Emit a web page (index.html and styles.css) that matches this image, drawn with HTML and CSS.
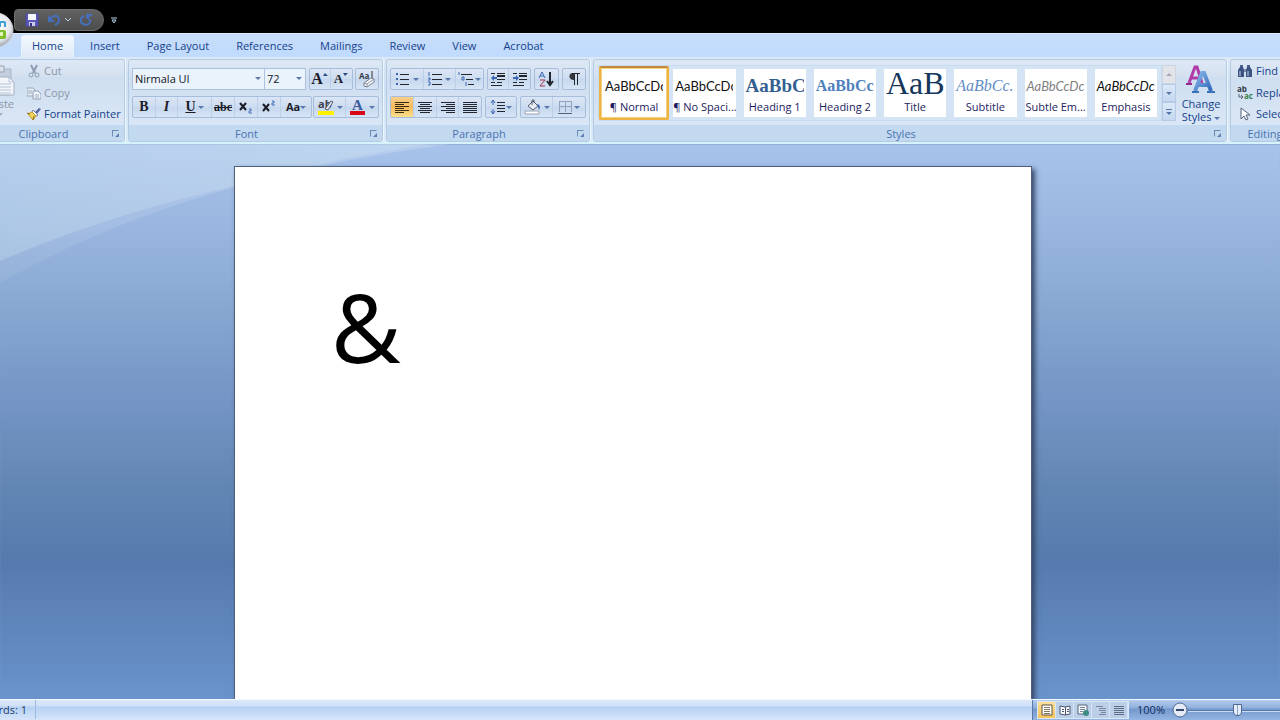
FILE: index.html
```html
<!DOCTYPE html>
<html lang="en">
<head>
<meta charset="utf-8">
<title>Document - Word</title>
<link rel="stylesheet" href="styles.css">
</head>
<body>
<div class="app">
  <header class="titlebar">
    <button class="office" aria-label="Office Button">
      <svg width="36" height="36" viewBox="0 0 36 36">
        <defs><radialGradient id="orb" cx=".5" cy=".4" r=".6"><stop offset="0" stop-color="#fff"/><stop offset=".7" stop-color="#e6e8ec"/><stop offset="1" stop-color="#9aa0aa"/></radialGradient></defs>
        <circle cx="18" cy="18" r="17" fill="url(#orb)" stroke="#c8ccd2"/>
        <path d="M22 15v-4q0-1 1-1h3q1 0 1 1v4" fill="none" stroke="#3b9fd8" stroke-width="2"/>
        <rect x="20" y="18" width="8" height="9" rx="2" fill="#7fbf2c"/><rect x="22" y="20" width="3" height="4" rx="1" fill="#e8f6c0"/>
        <path d="M10 20h6v6h-6z" fill="none" stroke="#e0652a" stroke-width="2"/>
      </svg>
    </button>
    <div class="quick">
      <button class="plain" aria-label="Save"><svg width="14" height="14" viewBox="0 0 14 14"><path d="M1 1h12v12H1z" fill="#5a58b8" stroke="#4a4aa4"/><path d="M3 1h8v6H3z" fill="#f4f6ff"/><path d="M4 9h6v4H4z" fill="#c9cdea"/><path d="M5 10h2v3H5z" fill="#30307c"/></svg></button>
      <button class="plain undo" aria-label="Undo"><svg width="14" height="14" viewBox="0 0 14 14"><path d="M4 5C8 1 12 3 12 7c0 3-2 4-4 5" fill="none" stroke="#456fba" stroke-width="2"/><path d="M1 2v7h7z" fill="#456fba"/></svg><svg width="6" height="4" viewBox="0 0 6 4"><path d="M0 0l3 3 3-3" fill="none" stroke="#b8d4ee"/></svg></button>
      <button class="plain" aria-label="Repeat"><svg width="14" height="14" viewBox="0 0 14 14"><path d="M5 3C1 4 1 10 4 11c4 2 8 0 7-5" fill="none" stroke="#456fba" stroke-width="2"/><path d="M7 1h6v2l-3 1v3L7 5z" fill="#456fba"/></svg></button>
    </div>
    <button class="plain more" aria-label="Customize Quick Access Toolbar"><svg width="6" height="7" viewBox="0 0 6 7"><path d="M0 1h6" stroke="#b8d4ee"/><path d="M1 3h4L3 6z" fill="none" stroke="#b8d4ee"/></svg></button>
  </header>

  <nav class="tabs">
    <button class="tab active">Home</button>
    <button class="tab">Insert</button>
    <button class="tab">Page Layout</button>
    <button class="tab">References</button>
    <button class="tab">Mailings</button>
    <button class="tab">Review</button>
    <button class="tab">View</button>
    <button class="tab">Acrobat</button>
  </nav>

  <main class="ribbon">
    <section class="group clipboard">
      <div class="body">
        <button class="paste" disabled>
          <svg width="32" height="32" viewBox="0 0 32 32"><path d="M3 4h24v26H3z" fill="#c3cfde" stroke="#a9b7c8"/><path d="M10 1h10v6H10z" fill="#dbe2ec" stroke="#97a5b8"/><path d="M11 12h14l5 5v13H11z" fill="#f2f6fb" stroke="#a4b1c2"/><path d="M25 12v5h5M13 19h14M13 22h14M13 25h14M13 28h14" fill="none" stroke="#b7c3d3"/></svg>
          <span>Paste</span><i class="caret pale"></i>
        </button>
        <div class="stack">
          <button class="cmd" disabled><svg width="14" height="14" viewBox="0 0 14 14"><path d="M4 1l4 8M10 1L6 9" stroke="#8c9bb2" stroke-width="2"/><circle cx="4" cy="11" r="2" fill="none" stroke="#8c9bb2"/><circle cx="10" cy="11" r="2" fill="none" stroke="#8c9bb2"/></svg>Cut</button>
          <button class="cmd" disabled><svg width="14" height="14" viewBox="0 0 14 14"><path d="M0 2h6l2 2v6H0z" fill="#e6edf6" stroke="#98a7bc"/><path d="M6 5h5l3 3v5H6z" fill="#eef3f9" stroke="#8f9fb5"/><path d="M1 5h4M1 7h4M8 9h4M8 11h4" stroke="#9eacbf"/></svg>Copy</button>
          <button class="cmd"><svg width="14" height="14" viewBox="0 0 14 14"><path d="M8 5l4-4 2 1-4 5z" fill="#5b66a8"/><path d="M6 3l5 5-2 1-4-4z" fill="#fff" stroke="#707a90"/><path d="M5 5l4 4-3 4-5-6z" fill="#f2d35c" stroke="#c29a2c"/><path d="M0 6l3 1M6 13l1-4" stroke="#8a6a1c"/></svg>Format Painter</button>
        </div>
      </div>
      <footer class="caption"><span>Clipboard</span><button class="launch" aria-label="Clipboard options"></button></footer>
    </section>

    <section class="group font">
      <div class="body rows">
        <div class="row">
          <div class="combos">
            <label class="combo name"><select aria-label="Font"><option>Nirmala UI</option></select><i class="caret"></i></label>
            <label class="combo size"><select aria-label="Font size"><option>72</option></select><i class="caret"></i></label>
          </div>
          <div class="set">
            <button aria-label="Grow Font"><span class="serif big">A</span><svg class="sup" width="5" height="4" viewBox="0 0 5 4"><path d="M0 3l2-3 3 3z" fill="#2d4c86"/></svg></button>
            <button aria-label="Shrink Font"><span class="serif mid">A</span><svg class="sup" width="5" height="4" viewBox="0 0 5 4"><path d="M0 0h5L2 3z" fill="#2d4c86"/></svg></button>
          </div>
          <div class="set"><button class="w22" aria-label="Clear Formatting"><svg width="18" height="18" viewBox="0 0 18 18"><text x="1" y="9" class="tiny">Aa</text><path d="M14 1v7" stroke="#333"/><path d="M6 13l7-5 3 1v3l-7 5-3-1z" fill="#f4f6fa" stroke="#777f90"/><path d="M6 13l3 1 7-5M9 14v3" fill="none" stroke="#8d95a6"/></svg></button></div>
        </div>
        <div class="row">
          <div class="set">
            <button class="w23 serif bold">B</button>
            <button class="w22 serif ital">I</button>
            <button class="w34"><span class="serif under">U</span><i class="caret"></i></button>
            <button class="w23"><span class="strike">abc</span></button>
            <button class="w23" aria-label="Subscript"><svg width="16" height="14" viewBox="0 0 16 14"><path d="M2 3l6 7M8 3l-6 7" stroke="#1c1c28" stroke-width="2"/><path d="M11 9h2v2h-2v2h3" fill="none" stroke="#456fba"/></svg></button>
            <button class="w23" aria-label="Superscript"><svg width="16" height="14" viewBox="0 0 16 14"><path d="M2 4l6 7M8 4l-6 7" stroke="#1c1c28" stroke-width="2"/><path d="M11 1h2v2h-2v2h3" fill="none" stroke="#456fba"/></svg></button>
            <button class="w30"><span class="case">Aa</span><i class="caret"></i></button>
          </div>
          <div class="set">
            <button class="w32" aria-label="Text Highlight Color"><svg width="18" height="18" viewBox="0 0 18 18"><path d="M1 13h16v4H1z" fill="#fff000"/><text x="1" y="10" class="mark">ab</text><path d="M8 11l6-8 2 1-5 8z" fill="#e4e6ee" stroke="#555d70"/></svg><i class="caret"></i></button>
            <button class="w32" aria-label="Font Color"><svg width="18" height="18" viewBox="0 0 18 18"><path d="M1 13h15v4H1z" fill="#d80818"/><text x="3" y="12" class="letter">A</text></svg><i class="caret"></i></button>
          </div>
        </div>
      </div>
      <footer class="caption"><span>Font</span><button class="launch" aria-label="Font options"></button></footer>
    </section>

    <section class="group para">
      <div class="body rows">
        <div class="row">
          <div class="set">
            <button class="w34" aria-label="Bullets"><svg width="16" height="14" viewBox="0 0 16 14"><path d="M1 2h2M1 7h2M1 12h2" stroke="#3c66b4" stroke-width="2"/><path d="M5 2h9M5 7h9M5 12h9" stroke="#22262e"/></svg><i class="caret"></i></button>
            <button class="w32" aria-label="Numbering"><svg width="16" height="14" viewBox="0 0 16 14"><path d="M2 0v4M1 6h2v2H1M1 10h2v3H1" fill="none" stroke="#3c66b4"/><path d="M5 2h10M5 7h10M5 12h10" stroke="#22262e"/></svg><i class="caret"></i></button>
            <button class="w28" aria-label="Multilevel List"><svg width="17" height="14" viewBox="0 0 17 14"><path d="M1 0v3M4 5h2v3H4zM8 10v4" fill="none" stroke="#3c66b4"/><path d="M3 2h11M8 7h7M10 12h6" stroke="#22262e"/></svg><i class="caret"></i></button>
          </div>
          <div class="set">
            <button class="w22" aria-label="Decrease Indent"><svg width="16" height="14" viewBox="0 0 16 14"><path d="M1 1h4M7 1h8M7 7h8M7 10h5M1 10h4M1 13h11" stroke="#22262e"/><path d="M7 4h8" stroke="#22262e" stroke-width="2"/><path d="M1 6l3-3v2h3v2H4v2z" fill="#3c66b4"/></svg></button>
            <button aria-label="Increase Indent"><svg width="16" height="14" viewBox="0 0 16 14"><path d="M1 1h4M7 1h8M7 7h8M7 10h5M1 10h4M1 13h11" stroke="#22262e"/><path d="M7 4h8" stroke="#22262e" stroke-width="2"/><path d="M7 6L4 3v2H1v2h3v2z" fill="#3c66b4"/></svg></button>
          </div>
          <div class="set"><button class="w23" aria-label="Sort"><svg width="16" height="16" viewBox="0 0 16 16"><path d="M1 7l3-6 3 6M2 5h4" fill="none" stroke="#3c66b4"/><path d="M2 9h5l-5 6h5" fill="none" stroke="#a3344a"/><path d="M12 1v12M9 10l3 4 3-4" fill="none" stroke="#22262e" stroke-width="2"/></svg></button></div>
          <div class="set"><button class="w23" aria-label="Show paragraph marks"><svg width="14" height="14" viewBox="0 0 14 14"><path d="M7 8C1 8 1 1 6 1h1z" fill="#33373f"/><path d="M5 1h8M7 1v12M10 1v12" stroke="#22262e"/></svg></button></div>
        </div>
        <div class="row">
          <div class="set">
            <button class="w23 on" aria-label="Align Left"><svg width="16" height="14" viewBox="0 0 16 14"><path d="M1 2h14M1 4h9M1 6h14M1 8h9M1 10h14M1 12h9" stroke="#3a2c14"/></svg></button>
            <button class="w23" aria-label="Center"><svg width="16" height="14" viewBox="0 0 16 14"><path d="M1 2h14M3 4h10M1 6h14M3 8h10M1 10h14M3 12h10" stroke="#22262e"/></svg></button>
            <button class="w22" aria-label="Align Right"><svg width="16" height="14" viewBox="0 0 16 14"><path d="M1 2h14M6 4h9M1 6h14M6 8h9M1 10h14M6 12h9" stroke="#22262e"/></svg></button>
            <button class="w22" aria-label="Justify"><svg width="16" height="14" viewBox="0 0 16 14"><path d="M1 2h14M1 4h14M1 6h14M1 8h14M1 10h14M1 12h14" stroke="#22262e"/></svg></button>
          </div>
          <div class="set"><button class="w30" aria-label="Line Spacing"><svg width="16" height="16" viewBox="0 0 16 16"><path d="M3 1v5M3 10v5M1 4l2-3 2 3M1 12l2 3 2-3" fill="none" stroke="#3c66b4"/><path d="M7 3h8M7 6h8M7 9h8M7 12h8" stroke="#22262e"/></svg><i class="caret"></i></button></div>
          <div class="set">
            <button class="w32" aria-label="Shading"><svg width="18" height="16" viewBox="0 0 18 16"><path d="M1 12h14v3H1z" fill="#fff" stroke="#9aa4b4"/><path d="M4 7l5-5 5 5-5 4z" fill="#e9eef6" stroke="#566070"/><path d="M8 6V1h2v3" fill="none" stroke="#566070"/><path d="M13 5c4 1 3 4 2 6z" fill="#3c66b4"/></svg><i class="caret"></i></button>
            <button class="w32" aria-label="Borders"><svg width="14" height="14" viewBox="0 0 14 14"><path d="M1 1h12M1 6h12M1 1v11M7 1v11M13 1v11" stroke="#93a3bc"/><path d="M0 13h14" stroke="#55617a"/></svg><i class="caret"></i></button>
          </div>
        </div>
      </div>
      <footer class="caption"><span>Paragraph</span><button class="launch" aria-label="Paragraph options"></button></footer>
    </section>

    <section class="group styles">
      <div class="body">
        <div class="gallery">
          <button class="style picked"><span class="sample">AaBbCcDc</span><span class="label">¶ Normal</span></button>
          <button class="style"><span class="sample">AaBbCcDc</span><span class="label">¶ No Spaci...</span></button>
          <button class="style"><span class="sample h1">AaBbCc</span><span class="label">Heading 1</span></button>
          <button class="style"><span class="sample h2">AaBbCc</span><span class="label">Heading 2</span></button>
          <button class="style"><span class="sample title">AaB</span><span class="label">Title</span></button>
          <button class="style"><span class="sample subtitle">AaBbCc.</span><span class="label">Subtitle</span></button>
          <button class="style"><span class="sample subtle">AaBbCcDc</span><span class="label">Subtle Em...</span></button>
          <button class="style"><span class="sample emph">AaBbCcDc</span><span class="label">Emphasis</span></button>
        </div>
        <div class="scroller">
          <button class="off" aria-label="Scroll up"><i class="caret up"></i></button>
          <button aria-label="Scroll down"><i class="caret"></i></button>
          <button aria-label="More styles"><i class="bar"></i><i class="caret"></i></button>
        </div>
        <button class="change">
          <svg width="32" height="32" viewBox="0 0 32 32"><defs><linearGradient id="blue" x2="1" y2="1"><stop offset="0" stop-color="#8ab8ea"/><stop offset="1" stop-color="#2f68b8"/></linearGradient></defs><path d="M4 18L10 2h2l5 16M6 13h9" fill="none" stroke="#b03aa8" stroke-width="3"/><path d="M1 19h6" stroke="#8c2c90" stroke-width="2"/><path d="M10 26l7-18h2l7 18M13 20h11" fill="none" stroke="url(#blue)" stroke-width="4"/><path d="M7 27h7M22 27h8" stroke="#3a70b8" stroke-width="2"/></svg>
          <span>Change</span><span>Styles <i class="caret"></i></span>
        </button>
      </div>
      <footer class="caption"><span>Styles</span><button class="launch" aria-label="Styles options"></button></footer>
    </section>

    <section class="group editing">
      <div class="body stack">
        <button class="cmd"><svg width="16" height="14" viewBox="0 0 16 14"><path d="M3 1h3v3H3zM10 1h3v3h-3z" fill="#4d628c"/><path d="M1 6l2-3h3l1 3v7H1zM15 6l-2-3h-3L9 6v7h6z" fill="#3c5280"/><path d="M7 5h2v3H7z" fill="#7b8db0"/><path d="M3 7v5M11 7v5" stroke="#c6d3ea"/></svg>Find</button>
        <button class="cmd"><svg width="16" height="14" viewBox="0 0 16 14"><text x="0" y="6" class="tiny">ab</text><text x="7" y="13" class="tiny green">ac</text><path d="M2 8v3h4M4 9l2 2-2 2" fill="none" stroke="#55617a"/></svg>Replace</button>
        <button class="cmd"><svg width="16" height="14" viewBox="0 0 16 14"><path d="M4 1v11l3-3 2 4 2-1-2-4h4z" fill="#fff" stroke="#55617a"/></svg>Select</button>
      </div>
      <footer class="caption"><span>Editing</span></footer>
    </section>
  </main>

  <div class="workspace">
    <svg class="swoosh" width="480" height="140" viewBox="0 0 480 140">
      <defs><linearGradient id="sheen" x2="1"><stop offset="0" stop-color="#fff" stop-opacity=".06"/><stop offset="1" stop-color="#fff" stop-opacity=".2"/></linearGradient></defs>
      <path d="M0 0H450Q340 14 235 43Q110 77 0 139z" fill="url(#sheen)"/>
      <path d="M0 0H430Q330 14 235 42Q110 70 0 117z" fill="#d6ecf4" fill-opacity=".26"/>
    </svg>
    <article class="page" contenteditable="true" spellcheck="false"><p>&amp;</p></article>
  </div>

  <footer class="status">
    <div class="info"><span class="words">Words: 1</span></div>
    <div class="view">
      <div class="modes">
        <button class="on" aria-label="Print Layout"><svg width="14" height="12" viewBox="0 0 14 12"><path d="M2 1h10v10H2z" fill="#fff" stroke="#5c5340"/><path d="M4 3h6M4 5h6M4 7h6M4 9h6" stroke="#857a60"/></svg></button>
        <button aria-label="Full Screen Reading"><svg width="14" height="12" viewBox="0 0 14 12"><path d="M2 2l5 1 5-1v8l-5 1-5-1z" fill="#f6f8fc" stroke="#4a556a"/><path d="M7 3v8M4 5h2M4 7h2M9 5h2M9 7h2" stroke="#4a556a"/></svg></button>
        <button aria-label="Web Layout"><svg width="14" height="12" viewBox="0 0 14 12"><path d="M2 1h9v9H2z" fill="#f4f7fb" stroke="#59647a"/><path d="M4 3h5M4 5h5M4 7h3" stroke="#7d8799"/><circle cx="10" cy="9" r="3" fill="#3d8c82"/></svg></button>
        <button aria-label="Outline"><svg width="14" height="12" viewBox="0 0 14 12"><path d="M2 2h7M5 4h7M5 6h7M7 8h5M5 10h7" stroke="#7c8698"/></svg></button>
        <button aria-label="Draft"><svg width="14" height="12" viewBox="0 0 14 12"><path d="M2 2h10M2 4h10M2 6h10M2 8h10M2 10h10" stroke="#5f6b80"/></svg></button>
      </div>
      <button class="plain percent">100%</button>
      <button class="plain" aria-label="Zoom Out"><svg width="16" height="16" viewBox="0 0 16 16"><circle cx="8" cy="8" r="7" fill="#e4ebf6" stroke="#4e6890"/><path d="M4 8h8" stroke="#33486c" stroke-width="2"/></svg></button>
      <input class="zoom" type="range" min="0" max="200" value="100" aria-label="Zoom">
    </div>
  </footer>
</div>
</body>
</html>
```
FILE: styles.css
```css
* { box-sizing: border-box; }
body {
  margin: 0;
  overflow: hidden;
  font: 11px/14px "Open Sans", "Noto Sans", sans-serif;
  color: #15428b;
}
button, select, input { font: inherit; color: inherit; margin: 0; }
button { border: 0; padding: 0; background: none; }
svg { display: block; flex: none; }
.app { display: flex; flex-direction: column; height: 100vh; overflow: hidden; }
.plain { display: flex; flex: none; align-items: center; }

/* Title bar */
.titlebar {
  position: relative;
  z-index: 2;
  display: flex;
  align-items: center;
  height: 33px;
  padding: 7px 0 0 14px;
  background: #000;
}
.office { position: absolute; left: -22px; top: 12px; border-radius: 50%; }
.quick {
  display: flex;
  align-items: center;
  gap: 8px;
  height: 22px;
  padding: 0 10px;
  background: linear-gradient(#626262, #4c4c4c);
  border: 1px solid #6e6e6e;
  border-radius: 4px 11px 11px 4px;
}
.undo { gap: 4px; }
.more { margin-left: 7px; }

/* Tabs */
.tabs {
  display: flex;
  gap: 5px;
  height: 24px;
  padding: 1px 0 0 21px;
  background: linear-gradient(#c8dcf8, #bfdbff);
  border-top: 1px solid #dbe9fc;
  flex: none;
}
.tab { padding: 0 10px 1px; border: 1px solid transparent; border-bottom: 0; white-space: nowrap; }
.tab.active {
  background: linear-gradient(#f3f8fe, #dfeaf7);
  border-color: #e9f2fd;
  border-radius: 3px 3px 0 0;
}

/* Ribbon */
.ribbon {
  display: flex;
  gap: 3px;
  height: 87px;
  flex: none;
  padding: 2px 0 0;
  background: linear-gradient(#dce8f6, #cfe0f2 30%, #dbebf8);
  border-bottom: 2px solid #d6f2fa;
}
.group {
  display: flex;
  flex-direction: column;
  flex: none;
  border: 1px solid #b3cbe4;
  border-radius: 3px;
  background: linear-gradient(#dee8f5, #d4e1f1 20%, #cfdef0 22%, #dce9f7);
  box-shadow: 1px 0 0 #eef6fd;
  overflow: hidden;
}
.body { display: flex; flex: 1; min-height: 0; }
.caption {
  display: flex;
  align-items: center;
  height: 16px;
  padding-top: 1px;
  background: #c2d9f0;
  color: #4b73b0;
  text-align: center;
}
.caption span { flex: 1; padding-right: 6px; }
.launch {
  position: relative;
  width: 7px;
  height: 7px;
  margin-right: 5px;
  border: 1px solid #6d8ab4;
  border-right-color: transparent;
  border-bottom-color: transparent;
}
.launch::after {
  content: "";
  position: absolute;
  right: -1px;
  bottom: -1px;
  border: 2px solid #6080b0;
  border-top-color: transparent;
  border-left-color: transparent;
}
.caret {
  display: inline-block;
  flex: none;
  border: 3px solid transparent;
  border-top-color: #5a78ac;
  border-bottom: 0;
}
.caret.up { border-top: 0; border-bottom: 3px solid #a9a9b4; }
.caret.pale { border-top-color: #a0acbc; }

.clipboard { width: 153px; margin-left: -28px; }
.clipboard .caption span { padding-left: 8px; }
.clipboard .body { gap: 4px; }
.paste { display: flex; flex-direction: column; align-items: center; width: 50px; padding: 5px 0 0 4px; color: #8d97a8; }
.paste .caret { margin-top: 2px; }
.stack { display: flex; flex-direction: column; }
.cmd {
  display: flex;
  align-items: center;
  gap: 3px;
  height: 22px;
  white-space: nowrap;
}
.cmd:disabled { color: #8d97a8; }

.rows { flex-direction: column; gap: 6px; padding: 8px 3px 0; }
.row { display: flex; gap: 3px; height: 22px; }
.set {
  display: flex;
  border: 1px solid #a6bddc;
  border-radius: 2px;
  background: linear-gradient(#dbe6f5, #cddcf0 50%, #c6d7ed 50%, #d6e4f5);
  overflow: hidden;
}
.set button {
  display: flex;
  align-items: center;
  justify-content: center;
  gap: 2px;
  width: 21px;
  color: #1c1c28;
  border-right: 1px solid #bccfe8;
}
.set button:last-child { border-right: 0; }
.set button.w22 { width: 22px; }
.set button.w23 { width: 23px; }
.set button.w28 { width: 28px; }
.set button.w30 { width: 30px; }
.set button.w32 { width: 32px; }
.set button.w34 { width: 34px; }
.set .w28, .set .w30 { gap: 0; }
.set .on { background: linear-gradient(#f9cf8c, #f6bb5c 50%, #fbe08c); }
.para path:not([fill]), .modes path:not([fill]) { shape-rendering: crispEdges; }
.serif { font-family: "Liberation Serif", serif; font-weight: 700; }
.big { font-size: 16px; }
.mid { font-size: 13px; }
.sup { align-self: flex-start; margin-top: 4px; }
.set .sup { margin-left: -2px; }
.set button.bold, .set button.ital, .under { font: 700 14px "Liberation Serif", serif; }
.set button.ital { font-style: italic; }
.under { text-decoration: underline; }
.strike { font: 700 12px/14px "Liberation Serif", serif; text-decoration: line-through; }
.case { font: 700 11px/14px "Open Sans", sans-serif; }
.tiny { font: 700 8px "Open Sans", sans-serif; fill: #333a48; }
.green { fill: #348048; }
.mark { font: 700 11px "Open Sans", sans-serif; fill: #3c4250; }
.letter { font: 700 15px "Liberation Serif", serif; fill: #3c5c9c; }

.combos { display: flex; }
.combo { position: relative; display: flex; }
.combo select {
  width: 100%;
  padding: 0 2px;
  appearance: none;
  border: 1px solid #abc1de;
  border-radius: 0;
  background: #eaf2fb;
  color: #101828;
}
.combo .caret { position: absolute; right: 4px; top: 9px; }
.name { width: 133px; }
.size { width: 41px; }
.size select { border-left: 0; }
.font { width: 255px; }
.font .row { justify-content: space-between; gap: 0; }
.para { width: 204px; }

/* Style gallery */
.styles { flex: 1 0 634px; }
.styles .body { padding: 5px 0 4px 4px; }
.gallery { display: grid; grid-template-columns: repeat(8, 1fr); flex: 1; background: #d5e4f5; border: 1px solid #c9dbf0; }
.style {
  display: flex;
  flex-direction: column;
  justify-content: flex-end;
  min-width: 0;
  margin: 3px 4px;
  background: #fff;
  overflow: hidden;
  white-space: nowrap;
}
.style.picked { margin: 0; padding: 0 2px 1px; border: 2px solid #efb340; border-top-color: #c28a3c; outline: 1px solid #f5d080; outline-offset: -3px; border-radius: 2px; }
.sample {
  display: block;
  width: 60px;
  padding-left: 2px;
  text-align: left;
  overflow: hidden;
  color: #101010;
  font: 13px/24px Lato, sans-serif;
}
.style .label { width: 100%; height: 19px; line-height: 17px; color: #1c1c60; text-align: center; }
.h1 { font: 700 19px/24px "Liberation Serif", serif; color: #365f91; }
.h2 { font: 700 16px/24px "Liberation Serif", serif; color: #4f81bd; }
.title { font: 32px/29px "Liberation Serif", serif; color: #17365d; }
.subtitle { font: italic 16px/24px "Liberation Serif", serif; color: #5f8cc4; }
.subtle { font-style: italic; color: #808080; }
.emph { font-style: italic; }
.scroller { display: flex; flex-direction: column; width: 14px; }
.scroller button {
  display: flex;
  flex: 1;
  flex-direction: column;
  gap: 2px;
  align-items: center;
  justify-content: center;
  border: 1px solid #b4cae6;
  background: linear-gradient(#dce8f7, #c4d8f0);
}
.scroller .off { background: #e3e4ea; border-color: #cdd5e2; }
.bar { width: 6px; height: 1px; background: #5a78ac; }
.change { display: flex; flex-direction: column; align-items: center; width: 50px; line-height: 13px; }
.change .caret { vertical-align: middle; }
.editing { width: 76px; }
.editing .stack { padding-left: 6px; }

/* Document */
.workspace {
  position: relative;
  flex: 1;
  min-height: 0;
  padding: 22px 14px 0 0;
  background: linear-gradient(#a8c3eb, #98b5df 16%, #88a8d2 29%, #7495c5 46%, #6286b4 62%, #567aad 75%, #6a93cc);
  box-shadow: inset 0 1px 1px #8faed6;
  overflow: hidden;
}
.swoosh { position: absolute; left: 0; top: 0; }
.page {
  position: relative;
  width: 798px;
  min-height: 100%;
  margin: 0 auto;
  padding: 97px 96px;
  background: #fff;
  border: 1px solid #4d5f7a;
  border-bottom: 0;
  box-shadow: 3px 3px 5px #36496a;
  color: #000;
  outline: 0;
}
.page p { margin: 0; font: 96px/124px "Open Sans", sans-serif; }

/* Status bar */
.status { display: flex; height: 21px; flex: none; border-top: 1px solid #f2f8ff; }
.info {
  flex: 1;
  background: linear-gradient(#dbe8fa, #cfe0f7 30%, #b5d0f3 35%, #d6e5fa);
  overflow: hidden;
}
.words {
  display: block;
  width: 66px;
  margin-left: -30px;
  padding: 0 8px 0 0;
  line-height: 19px;
  text-align: right;
  border-right: 1px solid #9dbae0;
  color: #1c3a68;
}
.view {
  display: flex;
  align-items: center;
  width: 248px;
  padding-left: 4px;
  background: linear-gradient(#b4cbec, #8fafdc 40%, #7398cc 45%, #94b5e3);
  border-left: 1px solid #5878aa;
  overflow: hidden;
}
.modes { display: flex; flex: none; height: 18px; border: 1px solid #dbe8f8; }
.modes button { display: flex; align-items: center; justify-content: center; width: 18px; background: #bccfe9; border-right: 1px solid #d6e4f6; }
.modes .on { background: linear-gradient(#fbe09c, #f8c458); }
.percent { width: 40px; margin: 0 1px 0 2px; justify-content: center; color: #102c60; }
.zoom {
  flex: none;
  width: 98px;
  height: 18px;
  appearance: none;
  background: linear-gradient(#5878a8, #5878a8) center / 100% 1px no-repeat, linear-gradient(#c8daf4, #c8daf4) center 10px / 100% 1px no-repeat;
}
.zoom::-webkit-slider-thumb {
  appearance: none;
  width: 9px;
  height: 12px;
  border: 1px solid #4e6890;
  border-radius: 1px 1px 5px 5px;
  background: linear-gradient(90deg, #e6edf8 3px, #8ba4cc 3px, #8ba4cc 4px, #e6edf8 4px);
}
```
